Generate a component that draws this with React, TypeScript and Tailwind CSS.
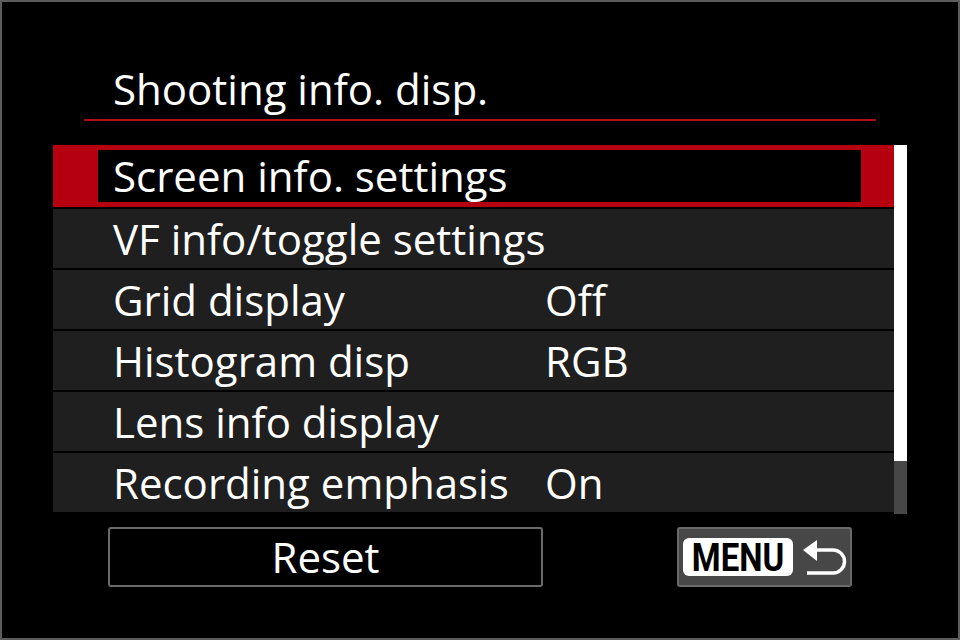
import React from "react";

const rows: { label: string; value?: string }[] = [
  { label: "VF info/toggle settings" },
  { label: "Grid display", value: "Off" },
  { label: "Histogram disp", value: "RGB" },
  { label: "Lens info display" },
  { label: "Recording emphasis", value: "On" },
];

function ReturnIcon() {
  return (
    <svg width="48" height="40" viewBox="0 0 48 40" className="block">
      <path d="M3 13 L17 3 L17 24 Z" fill="#ffffff" />
      <path
        d="M16 13 H33 A11.5 11.5 0 0 1 33 36 H7"
        fill="none"
        stroke="#ffffff"
        strokeWidth="3.5"
      />
    </svg>
  );
}

export default function App() {
  return (
    <div
      className="w-[960px] h-[640px] bg-black border-2 border-[#5c5c5c] flex flex-col text-white overflow-hidden"
      style={{ fontFamily: '"Open Sans", "Noto Sans", sans-serif' }}
    >
      <div className="mt-[66px] h-[42px] pl-[111px] text-[42px] leading-[42px] whitespace-nowrap">
        Shooting info. disp.
      </div>
      <div className="mt-[9px] ml-[82px] w-[792px] h-[2px] bg-[#b3101c]" />
      <div className="mt-[24px] ml-[51px] flex items-start">
        <div className="w-[841px] flex flex-col">
          <div className="h-[62px] bg-[#b4000f] pl-[45px] pr-[33px] py-[5px] flex">
            <div className="flex-1 bg-black flex items-center pl-[15px] text-[42px] leading-[42px] whitespace-nowrap">
              Screen info. settings
            </div>
          </div>
          {rows.map((r) => (
            <div
              key={r.label}
              className="mt-[2px] h-[59px] bg-[#1f1f1f] flex items-center pl-[60px] text-[42px] leading-[42px] whitespace-nowrap"
            >
              <span className="w-[432px]">{r.label}</span>
              {r.value && <span>{r.value}</span>}
            </div>
          ))}
        </div>
        <div className="w-[13px] h-[369px] flex flex-col">
          <div className="h-[316px] bg-white" />
          <div className="flex-1 bg-[#474747]" />
        </div>
      </div>
      <div className="mt-[13px] ml-[106px] flex items-start">
        <div className="w-[435px] h-[60px] border-2 border-[#6a6a6a] rounded-[3px] flex items-center justify-center text-[42px] leading-[42px]">
          Reset
        </div>
        <div className="ml-[134px] w-[175px] h-[60px] bg-[#474747] border-2 border-[#6a6a6a] rounded-[3px] flex items-center pl-[4px]">
          <div
            className="w-[110px] h-[38px] bg-white rounded-[6px] flex items-center justify-center text-black font-bold"
            style={{ fontFamily: 'Roboto, "Liberation Sans", sans-serif' }}
          >
            <span className="block text-[33px] leading-[33px] scale-y-[1.18]">MENU</span>
          </div>
          <div className="ml-[7px]">
            <ReturnIcon />
          </div>
        </div>
      </div>
    </div>
  );
}
